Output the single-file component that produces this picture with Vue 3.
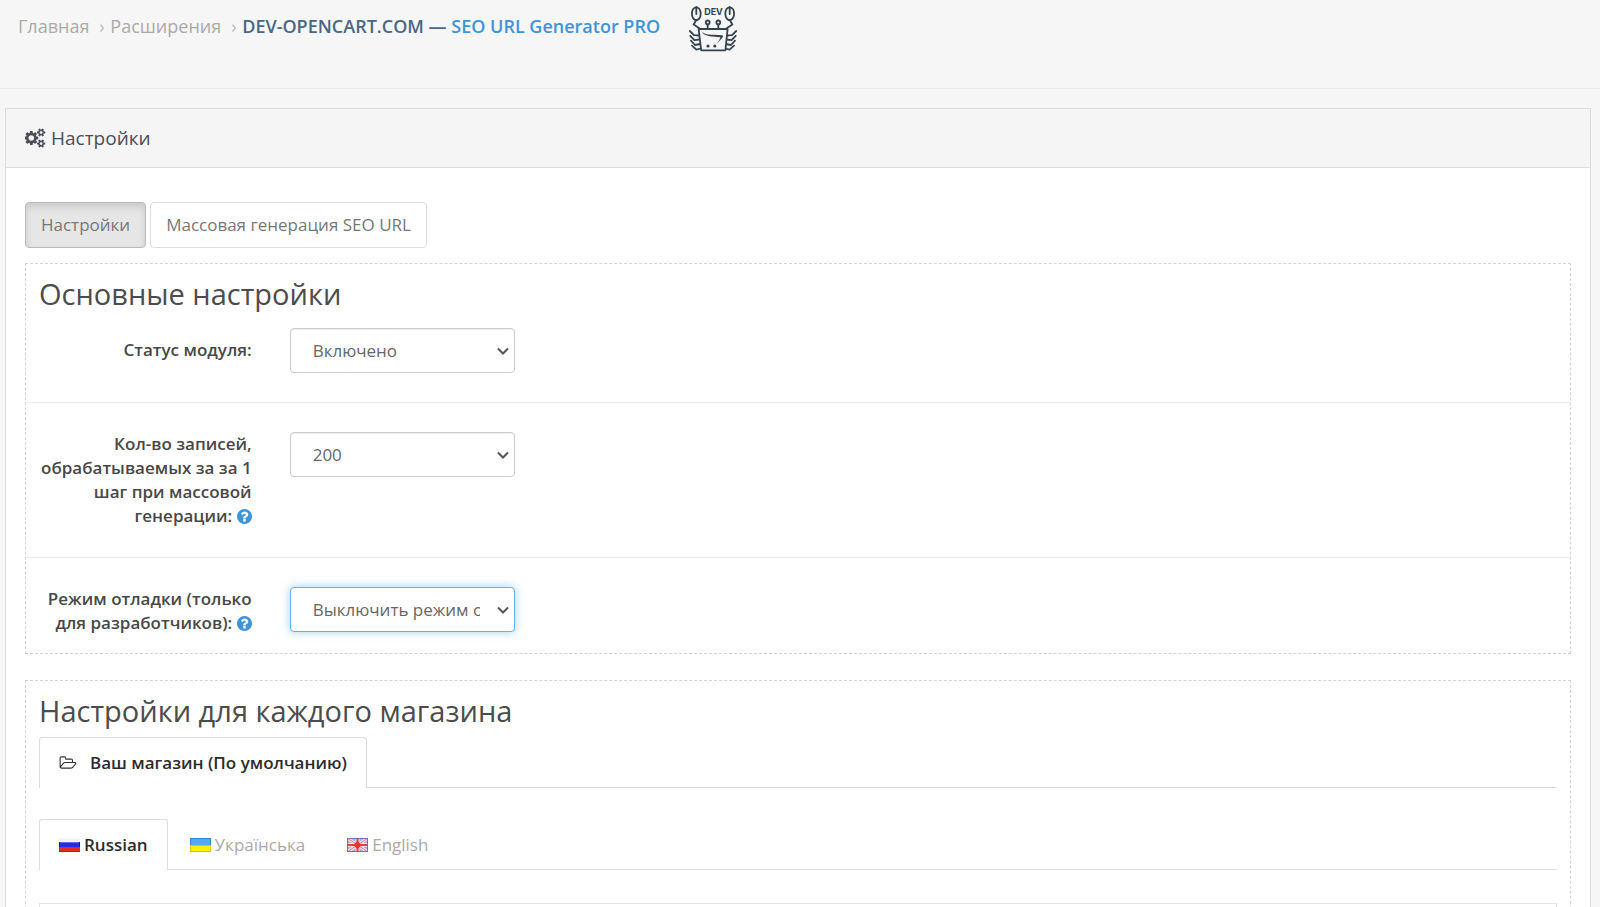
<script setup>
import { ref } from 'vue'

const status = ref('on')
const step = ref('200')
const debug = ref('off')

const languages = [
  { code: 'ru', name: 'Russian', active: true },
  { code: 'uk', name: 'Українська', active: false },
  { code: 'en', name: 'English', active: false }
]
</script>

<template>
  <div class="page">
    <header class="page-header">
      <nav class="breadcrumb" aria-label="Навигация">
        <a href="#">Главная</a>
        <span class="sep">›</span>
        <a href="#">Расширения</a>
        <span class="sep">›</span>
        <a href="#" class="current">DEV-OPENCART.COM — <span class="module">SEO URL Generator PRO</span></a>
      </nav>
      <svg class="crab" viewBox="0 0 48 46" aria-hidden="true">
        <g id="half" fill="none" stroke="#34434f" stroke-width="1.8" stroke-linecap="round" stroke-linejoin="round">
          <path d="M7.3 8V1.500M7.300 1C1.600 2.500 1.800 11.500 6.200 14M7.300 1C13 2.500 12.800 11.500 8.400 14M6.200 14h2.200M7 14.500L4.600 18.500L10 22" />
          <path d="M10.200 29.500L5 29.200L.8 25M10.800 33.500L5.400 34.200L1.300 29.800M11.200 38L6 39L2 34.600M11.800 42.500L7.400 43.600L3 39.600" />
          <circle cx="18.700" cy="16.400" r="1.900" />
          <path d="M18.700 18.500V22.500" />
        </g>
        <use href="#half" transform="matrix(-1 0 0 1 48 0)" />
        <path d="M9.600 23H38.600L36.400 44.300H12.200Z" fill="#f6f6f6" stroke="#34434f" stroke-width="1.800" stroke-linejoin="round" />
        <path d="M12.500 25.200C16 29.500 22 28.300 33 29.200C35.500 29.800 33 32.500 28.200 37C30.500 33.500 32 31.500 31 31.200C25 30 15.500 31.500 12.500 25.200Z" fill="#34434f" />
        <circle cx="19" cy="40" r="1.600" fill="#34434f" />
        <circle cx="25.800" cy="40" r="1.600" fill="#34434f" />
        <text x="24.500" y="9" text-anchor="middle" class="crab-text">DEV</text>
      </svg>
    </header>

    <main class="panel">
      <div class="panel-heading">
        <svg class="cogs" viewBox="0 0 1920 1792" aria-hidden="true">
          <path d="M832 896q0-106-75-181t-181-75-181 75-75 181 75 181 181 75 181-75 75-181zm768 512q0-52-38-90t-90-38-90 38-38 90q0 53 37.500 90.500t90.500 37.500 90.500-37.500 37.500-90.500zm0-1024q0-52-38-90t-90-38-90 38-38 90q0 53 37.500 90.500t90.500 37.500 90.500-37.500 37.500-90.500zm-384 421v185q0 10-7 19.500t-16 10.500l-155 24q-11 35-32 76 34 48 90 115 7 11 7 20 0 12-7 19-23 30-82.500 89.500t-78.500 59.500q-11 0-21-7l-115-90q-37 19-77 31-11 108-23 155-7 24-30 24h-186q-11 0-20-7.500t-10-17.500l-23-153q-34-10-75-31l-118 89q-7 7-20 7-11 0-21-8-144-133-144-160 0-9 7-19 10-14 41-53t47-61q-23-44-35-82l-152-24q-10-1-17-9.500t-7-19.500v-185q0-10 7-19.500t16-10.500l155-24q11-35 32-76-34-48-90-115-7-11-7-20 0-12 7-20 22-30 82-89t79-59q11 0 21 7l115 90q34-18 77-32 11-108 23-154 7-24 30-24h186q11 0 20 7.500t10 17.500l23 153q34 10 75 31l118-89q8-7 20-7 11 0 21 8 144 133 144 160 0 8-7 19-12 16-42 54t-45 60q23 48 34 82l152 23q10 2 17 10.500t7 19.500zm640 533v140q0 16-149 31-12 27-30 52 51 113 51 138 0 4-4 7-122 71-124 71-8 0-46-47t-52-68q-20 2-30 2t-30-2q-14 21-52 68t-46 47q-2 0-124-71-4-3-4-7 0-25 51-138-18-25-30-52-149-15-149-31v-140q0-16 149-31 13-29 30-52-51-113-51-138 0-4 4-7 4-2 35-20t59-34 30-16q8 0 46 46.500t52 67.500q20-2 30-2t30 2q51-71 92-112l6-2q4 0 124 70 4 3 4 7 0 25-51 138 17 23 30 52 149 15 149 31zm0-1024v140q0 16-149 31-12 27-30 52 51 113 51 138 0 4-4 7-122 71-124 71-8 0-46-47t-52-68q-20 2-30 2t-30-2q-14 21-52 68t-46 47q-2 0-124-71-4-3-4-7 0-25 51-138-18-25-30-52-149-15-149-31v-140q0-16 149-31 13-29 30-52-51-113-51-138 0-4 4-7 4-2 35-20t59-34 30-16q8 0 46 46.500t52 67.500q20-2 30-2t30 2q51-71 92-112l6-2q4 0 124 70 4 3 4 7 0 25-51 138 17 23 30 52 149 15 149 31z" />
        </svg>
        <h1>Настройки</h1>
      </div>

      <div class="panel-body">
        <div class="buttons">
          <button type="button" class="btn active">Настройки</button>
          <button type="button" class="btn">Массовая генерация SEO URL</button>
        </div>

        <section class="box">
          <h2>Основные настройки</h2>
          <div class="row first">
            <label for="status">Статус модуля:</label>
            <div class="select-wrap">
              <select id="status" v-model="status">
                <option value="on">Включено</option>
                <option value="off">Отключено</option>
              </select>
              <svg class="chevron" viewBox="0 0 12 8" aria-hidden="true"><path d="M1 1.500L6 6.500L11 1.500" /></svg>
            </div>
          </div>
          <div class="row">
            <label for="step">Кол-во записей, обрабатываемых за за 1 шаг при массовой генерации:
              <svg class="help" viewBox="128 128 1536 1536" aria-hidden="true"><path d="M1024 1376v-192q0-14-9-23t-23-9h-192q-14 0-23 9t-9 23v192q0 14 9 23t23 9h192q14 0 23-9t9-23zm256-672q0-88-55.500-163t-138.500-116-170-41q-243 0-371 213-15 24 8 42l132 100q7 6 19 6 16 0 25-12 53-68 86-92 34-24 86-24 48 0 85.500 26t37.500 59q0 38-20 61t-68 45q-63 28-115.500 86.500t-52.500 125.500v36q0 14 9 23t23 9h192q14 0 23-9t9-23q0-19 21.500-49.500t54.500-49.500q32-18 49-28.500t46-35 44.500-48 28-60.500 12.500-81zm384 192q0 209-103 385.500t-279.500 279.500-385.500 103-385.500-103-279.500-279.500-103-385.500 103-385.500 279.500-279.500 385.500-103 385.500 103 279.500 279.500 103 385.500z" /></svg>
            </label>
            <div class="select-wrap">
              <select id="step" v-model="step">
                <option value="200">200</option>
                <option value="500">500</option>
              </select>
              <svg class="chevron" viewBox="0 0 12 8" aria-hidden="true"><path d="M1 1.500L6 6.500L11 1.500" /></svg>
            </div>
          </div>
          <div class="row last">
            <label for="debug">Режим отладки (только для разработчиков):
              <svg class="help" viewBox="128 128 1536 1536" aria-hidden="true"><path d="M1024 1376v-192q0-14-9-23t-23-9h-192q-14 0-23 9t-9 23v192q0 14 9 23t23 9h192q14 0 23-9t9-23zm256-672q0-88-55.500-163t-138.500-116-170-41q-243 0-371 213-15 24 8 42l132 100q7 6 19 6 16 0 25-12 53-68 86-92 34-24 86-24 48 0 85.500 26t37.500 59q0 38-20 61t-68 45q-63 28-115.500 86.500t-52.500 125.500v36q0 14 9 23t23 9h192q14 0 23-9t9-23q0-19 21.500-49.500t54.500-49.500q32-18 49-28.500t46-35 44.500-48 28-60.500 12.500-81zm384 192q0 209-103 385.500t-279.500 279.500-385.500 103-385.500-103-279.500-279.500-103-385.500 103-385.500 279.500-279.500 385.500-103 385.500 103 279.500 279.500 103 385.500z" /></svg>
            </label>
            <div class="select-wrap">
              <select id="debug" v-model="debug" class="focused">
                <option value="off">Выключить режим отладки</option>
                <option value="on">Включить режим отладки</option>
              </select>
              <svg class="chevron" viewBox="0 0 12 8" aria-hidden="true"><path d="M1 1.500L6 6.500L11 1.500" /></svg>
            </div>
          </div>
        </section>

        <section class="box stores">
          <h2>Настройки для каждого магазина</h2>
          <nav class="tabs">
            <a href="#" class="tab active store">
              <svg class="folder" viewBox="0 128 2048 1536" aria-hidden="true"><path d="M1845 931q0-35-53-35h-1088q-40 0-85.500 21.500t-71.500 52.500l-294 363q-18 24-18 40 0 35 53 35h1088q40 0 86-22t71-53l294-363q18-22 18-39zm-1141-163h768v-160q0-40-28-68t-68-28h-576q-40 0-68-28t-28-68v-64q0-40-28-68t-68-28h-320q-40 0-68 28t-28 68v853l256-315q44-53 116-87.500t140-34.500zm1269 163q0 62-46 120l-295 363q-43 53-116 87.500t-140 34.500h-1088q-92 0-158-66t-66-158v-960q0-92 66-158t158-66h320q92 0 158 66t66 158v32h544q92 0 158 66t66 158v160h192q54 0 99 24.500t67 70.500q15 32 15 68z" /></svg>
              Ваш магазин (По умолчанию)
            </a>
          </nav>
          <nav class="tabs languages">
            <a v-for="lang in languages" :key="lang.code" href="#" class="tab" :class="{ active: lang.active }">
              <svg v-if="lang.code === 'ru'" class="flag" viewBox="0 0 21 14" aria-hidden="true">
                <rect width="21" height="14" fill="#f4f4f8" />
                <rect y="4" width="21" height="5" fill="#2a2ae0" />
                <rect y="4" width="21" height="1" fill="#6a6aee" />
                <rect y="9" width="21" height="5" fill="#e02a22" />
                <path d="M0 4h1v5H0zM20 4h1v5h-1z" fill="#1616b8" />
                <path d="M0 13h21v1H0z" fill="#c01812" />
              </svg>
              <svg v-else-if="lang.code === 'uk'" class="flag" viewBox="0 0 21 14" aria-hidden="true">
                <rect width="21" height="7" fill="#2f86dc" />
                <rect x="1" y="1" width="19" height="6" fill="#55aaf8" />
                <rect y="7" width="21" height="7" fill="#dcc200" />
                <rect x="1" y="8" width="19" height="5" fill="#faf000" />
              </svg>
              <svg v-else class="flag" viewBox="0 0 21 14" aria-hidden="true">
                <rect width="21" height="14" fill="#a9aede" />
                <path d="M0 0L21 14M21 0L0 14" stroke="#f3eef8" stroke-width="3" />
                <path d="M0 0L21 14M21 0L0 14" stroke="#ee6a6c" stroke-width="1" />
                <path d="M10.500 0V14M0 7H21" stroke="#f6dce4" stroke-width="4" />
                <path d="M10.500 0V14M0 7H21" stroke="#f0403c" stroke-width="2" />
                <path d="M6 7l4.500-4L15 7l-4.500 4z" fill="#f0302c" />
                <rect x=".5" y=".5" width="20" height="13" fill="none" stroke="#5a63a8" opacity=".8" />
              </svg>
              {{ lang.name }}
            </a>
          </nav>
          <div class="inner-panel"></div>
        </section>
      </div>
    </main>
  </div>
</template>

<style>
body {
  background: #f6f6f6;
  overflow: hidden;
}
</style>

<style scoped>
.page {
  height: 100vh;
  overflow: hidden;
  font-family: "Open Sans", "Noto Sans", sans-serif;
  font-size: 17px;
  line-height: 24px;
  color: #666;
}
.page * {
  box-sizing: border-box;
}
a {
  text-decoration: none;
}
.page-header {
  display: flex;
  align-items: flex-start;
  gap: 29px;
  height: 89px;
  padding: 6px 18px 0;
  border-bottom: 1px solid #e9e9e9;
}
.breadcrumb {
  display: flex;
  padding-top: 8px;
  font-size: 18px;
}
.breadcrumb a {
  color: #aaa;
}
.breadcrumb .sep {
  width: 21px;
  padding-left: 10px;
  color: #bbb;
}
.breadcrumb .current {
  font-weight: 600;
  color: #4a6784;
}
.breadcrumb .module {
  color: #3f94d8;
}
.crab {
  width: 48px;
  height: 46px;
}
.crab-text {
  font: 700 9px Inter, sans-serif;
  fill: #34434f;
}
.panel {
  margin: 19px 9px 0 5px;
  border: 1px solid #dcdcdc;
  background: #fff;
}
.panel-heading {
  display: flex;
  align-items: center;
  gap: 5px;
  height: 59px;
  padding: 0 19px;
  background: #f5f5f5;
  border-bottom: 1px solid #dcdcdc;
  color: #4c4d5a;
}
.panel-heading h1 {
  margin: 0;
  font-size: 19px;
  font-weight: 400;
}
.cogs {
  width: 21px;
  height: 20px;
  fill: #4c4d5a;
}
.panel-body {
  padding: 34px 19px 0;
}
.buttons {
  display: flex;
  gap: 4px;
  margin-bottom: 15px;
}
.btn {
  height: 46px;
  padding: 0 15px;
  border: 1px solid #ddd;
  border-radius: 4px;
  background: #fff;
  font: inherit;
  color: #777;
}
.btn.active {
  background: #e6e6e6;
  border-color: #bbb;
  box-shadow: inset 0 4px 7px rgba(0, 0, 0, 0.125);
}
.box {
  border: 1px dashed #d4d4d4;
}
.box h2 {
  margin: 0;
  padding: 13px 13px 0;
  font-size: 29px;
  line-height: 34px;
  font-weight: 400;
  color: #4c4c4c;
}
.row {
  display: grid;
  grid-template-columns: repeat(6, minmax(0, 1fr));
  column-gap: 38px;
  align-items: start;
  padding: 29px 0;
}
.row + .row {
  border-top: 1px solid #ededed;
}
.row.first {
  padding-top: 17px;
}
.row.last {
  padding-bottom: 18px;
}
.row label {
  text-align: right;
  font-weight: 600;
  color: #484848;
}
.row.first label {
  padding-top: 10px;
}
.help {
  width: 15px;
  height: 15px;
  vertical-align: -2px;
  fill: #3f94d8;
}
.select-wrap {
  position: relative;
}
.chevron {
  position: absolute;
  right: 6px;
  top: 19px;
  width: 12px;
  height: 8px;
  fill: none;
  stroke: #555;
  stroke-width: 2;
  pointer-events: none;
}
select {
  display: block;
  appearance: none;
  width: 100%;
  height: 45px;
  padding: 0 34px 0 22px;
  border: 1px solid #ccc;
  border-radius: 4px;
  background: #fff;
  box-shadow: inset 0 1px 1px rgba(0, 0, 0, 0.075);
  font: inherit;
  color: #666;
}
select.focused {
  border-color: #66afe9;
  box-shadow: 0 0 10px rgba(102, 175, 233, 0.6);
  outline: none;
}
.stores {
  margin-top: 26px;
}
.tabs {
  display: flex;
  margin: 9px 13px 0;
  border-bottom: 1px solid #ddd;
}
.languages {
  margin-top: 31px;
}
.tab {
  display: flex;
  align-items: center;
  gap: 4px;
  height: 51px;
  margin-bottom: -1px;
  padding: 0 19px;
  border: 1px solid transparent;
  border-bottom: 0;
  border-radius: 3px 3px 0 0;
  color: #aaa;
}
.tab + .tab {
  margin-left: 2px;
}
.tab.active {
  border-color: #ddd;
  background: #fff;
  font-weight: 600;
  color: #2c2c2c;
}
.tab.store {
  gap: 13px;
}
.folder {
  width: 18px;
  height: 14px;
  fill: #333;
}
.flag {
  width: 21px;
  height: 14px;
}
.inner-panel {
  height: 80px;
  margin: 33px 13px 0;
  border: 1px solid #e4e4e4;
}
</style>
